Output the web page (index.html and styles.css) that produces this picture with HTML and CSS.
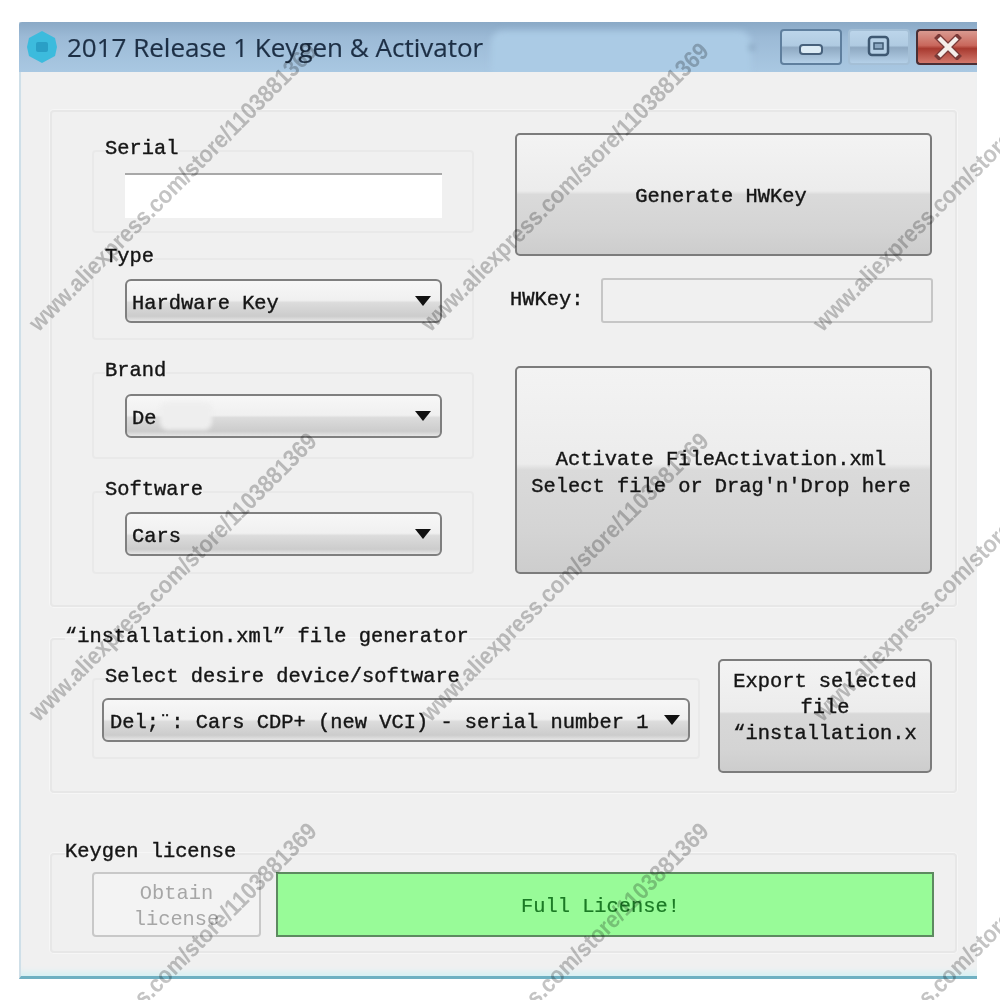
FILE: index.html
```html
<!DOCTYPE html>
<html lang="en">
<head>
    <meta charset="UTF-8">
    <meta name="viewport" content="width=device-width, initial-scale=1.0">
    <title>2017 Release 1 Keygen &amp; Activator</title>
    <link rel="stylesheet" href="styles.css">
</head>
<body>
    <div class="window">
        <div class="titlebar">
            <svg class="app-icon" width="32" height="34" viewBox="0 0 32 34">
                <path d="M16 1 L29 8 L31 17 L29 26 L16 33 L3 26 L1 17 L3 8 Z" fill="#3cbbdd"/>
                <rect x="10" y="12" width="12" height="10" rx="2" fill="#2a9fc6"/>
            </svg>
            <span class="app-title">2017 Release 1 Keygen &amp; Activator</span>
            <div class="title-smudge"></div>
            <div class="caption-buttons">
                <div class="caption-btn">
                    <svg width="26" height="14" viewBox="0 0 26 14">
                        <rect x="2" y="2" width="22" height="9" rx="3" fill="#dcebf5" stroke="#47617c" stroke-width="2"/>
                    </svg>
                </div>
                <div class="caption-btn max-btn">
                    <svg width="26" height="26" viewBox="0 0 26 26">
                        <rect x="3" y="3" width="19" height="18" rx="3" fill="#b6d0e6" stroke="#3e5872" stroke-width="2.5"/>
                        <rect x="8" y="9" width="9" height="6" fill="#8aa6c0" stroke="#3e5872" stroke-width="1.5"/>
                    </svg>
                </div>
                <div class="caption-btn close-btn">
                    <svg width="30" height="26" viewBox="0 0 30 26">
                        <path d="M6 4 L24 22 M24 4 L6 22" stroke="#7a3a38" stroke-width="7" stroke-linecap="square"/>
                        <path d="M6 4 L24 22 M24 4 L6 22" stroke="#f4eeea" stroke-width="4.5"/>
                    </svg>
                </div>
            </div>
        </div>

        <div class="window-body">
            <div class="panel panel-main">
                <div class="left-col">
                    <fieldset class="group group-serial">
                        <legend>Serial</legend>
                        <div class="serial-input"></div>
                    </fieldset>
                    <fieldset class="group">
                        <legend>Type</legend>
                        <div class="combo"><span>Hardware Key</span><i class="arrow"></i></div>
                    </fieldset>
                    <fieldset class="group group-brand">
                        <legend>Brand</legend>
                        <div class="combo"><span>De</span><div class="combo-smudge"></div><i class="arrow"></i></div>
                    </fieldset>
                    <fieldset class="group group-last">
                        <legend>Software</legend>
                        <div class="combo"><span>Cars</span><i class="arrow"></i></div>
                    </fieldset>
                </div>
                <div class="right-col">
                    <button type="button" class="btn generate-btn">Generate HWKey</button>
                    <div class="hwkey-row">
                        <label>HWKey:</label>
                        <div class="hwkey-input"></div>
                    </div>
                    <button type="button" class="btn activate-btn">Activate FileActivation.xml<br>Select file or Drag'n'Drop here</button>
                </div>
            </div>

            <fieldset class="panel panel-generator">
                <legend>“installation.xml” file generator</legend>
                <div class="generator-row">
                    <fieldset class="group group-device">
                        <legend>Select desire device/software</legend>
                        <div class="combo combo-device"><span>Del;¨: Cars CDP+ (new VCI) - serial number 1</span><i class="arrow"></i></div>
                    </fieldset>
                    <button type="button" class="btn export-btn">Export selected<br>file<br>“installation.x</button>
                </div>
            </fieldset>

            <fieldset class="panel panel-license">
                <legend>Keygen license</legend>
                <div class="license-row">
                    <button type="button" class="obtain-btn" disabled>Obtain<br>license</button>
                    <div class="license-status">Full License!</div>
                </div>
            </fieldset>
        </div>
    </div>

    <div class="watermarks">
        <div><span>www.aliexpress.com/store/1103881369</span></div>
        <div><span>www.aliexpress.com/store/1103881369</span></div>
        <div><span>www.aliexpress.com/store/1103881369</span></div>
        <div><span>www.aliexpress.com/store/1103881369</span></div>
        <div><span>www.aliexpress.com/store/1103881369</span></div>
        <div><span>www.aliexpress.com/store/1103881369</span></div>
        <div><span>www.aliexpress.com/store/1103881369</span></div>
        <div><span>www.aliexpress.com/store/1103881369</span></div>
        <div><span>www.aliexpress.com/store/1103881369</span></div>
    </div>
</body>
</html>
```

FILE: styles.css
```css
* {
    margin: 0;
    padding: 0;
    box-sizing: border-box;
}

html, body {
    height: 1000px;
    overflow: hidden;
}

body {
    background: white;
    padding: 22px 0 0 19px;
    font-family: "Liberation Mono", monospace;
    font-size: 20.4px;
    color: #151515;
    -webkit-text-stroke: 0.4px #151515;
}

.window {
    width: 958px;
    height: 957px;
    background: #f0f0f0;
    border-left: 2px solid #cfdfe8;
    border-bottom: 3px solid #6fb0c2;
    box-shadow: inset 0 -8px 6px -4px #d6f0f4;
}

/* title bar */
.titlebar {
    position: relative;
    display: flex;
    align-items: center;
    height: 50px;
    margin-left: -2px;
    padding-left: 7px;
    background: linear-gradient(#8aa9c6 0%, #9cbad6 30%, #a9c8e2 100%);
    border-radius: 3px 0 0 0;
    overflow: hidden;
}

.app-icon {
    margin-right: 9px;
}

.app-title {
    font-family: "Open Sans", sans-serif;
    font-size: 26px;
    color: #1d2f45;
    -webkit-text-stroke: 0.2px #1d2f45;
    white-space: nowrap;
}

.title-smudge {
    position: absolute;
    left: 472px;
    top: 9px;
    width: 260px;
    height: 50px;
    background: #abcbe5;
    border-radius: 12px;
    filter: blur(3px);
}

.title-smudge::after {
    content: "";
    position: absolute;
    right: -2px;
    top: 15px;
    width: 3px;
    height: 3px;
    background: #3e5872;
}

.caption-buttons {
    display: flex;
    gap: 6px;
    margin-left: auto;
    position: relative;
}

.caption-btn {
    display: flex;
    align-items: center;
    justify-content: center;
    width: 62px;
    height: 36px;
    border: 2px solid #5f7f9e;
    border-radius: 4px;
    background: linear-gradient(#bcd5ea 0%, #b0cbe2 45%, #8fa9c2 52%, #b4d0e8 100%);
}

.caption-btn svg {
    margin-top: 6px;
}

.max-btn {
    border-color: #a4bfd6;
}

.max-btn svg {
    margin-top: 0;
}

.close-btn {
    border-color: #4a2f35;
    border-right: none;
    border-radius: 4px 0 0 4px;
    width: 61px;
    background: linear-gradient(#d99a90 0%, #c9675c 45%, #a83a30 55%, #d2786c 100%);
}

.close-btn svg {
    margin-top: 0;
}

/* panels */
.window-body {
    padding: 38px 0 0 29px;
}

.panel {
    width: 907px;
    border: 2px solid #e7e7e7;
    border-radius: 4px;
    box-shadow: 0 0 0 1px #f6f6f6;
}

legend {
    margin-left: 13px;
    padding-bottom: 4px;
    line-height: 24px;
    white-space: nowrap;
}

.panel-main {
    display: flex;
    align-items: flex-start;
    padding: 21px 0 31px 40px;
}

.left-col {
    width: 382px;
    margin-top: 4px;
}

.right-col {
    width: 423px;
    margin-left: 36px;
}

.group {
    min-width: 0;
    border: 2px solid #e9e9e9;
    border-radius: 4px;
    padding: 6px 0 15px 31px;
    margin-bottom: 19px;
}

.group legend {
    margin-left: -20px;
}

.group-serial {
    padding-top: 8px;
    padding-bottom: 13px;
    margin-bottom: 12px;
}

.group-brand {
    padding-top: 7px;
    padding-bottom: 19px;
}

.group-last {
    padding-bottom: 16px;
    margin-bottom: 0;
}

.serial-input {
    width: 317px;
    height: 45px;
    background: white;
    border-top: 2px solid #a8a8a8;
}

.combo {
    position: relative;
    display: flex;
    align-items: center;
    justify-content: space-between;
    width: 317px;
    height: 44px;
    padding: 0 9px 0 5px;
    border: 2px solid #7f7f7f;
    border-radius: 6px;
    background: linear-gradient(#f7f7f7 0%, #f0f0f0 48%, #dcdcdc 54%, #cccccc 88%, #e6e6e6 100%);
    white-space: nowrap;
}

.combo span {
    position: relative;
    top: 2px;
}

.combo-smudge {
    position: absolute;
    left: 33px;
    top: 6px;
    width: 52px;
    height: 28px;
    background: #eeeeee;
    border-radius: 8px;
    filter: blur(2px);
}

.arrow {
    flex: none;
    width: 0;
    height: 0;
    border-left: 8px solid transparent;
    border-right: 8px solid transparent;
    border-top: 10px solid #111;
}

/* buttons on the right */
.btn {
    display: block;
    font-family: inherit;
    font-size: inherit;
    color: inherit;
    -webkit-text-stroke: inherit;
    line-height: 27px;
    border: 2px solid #7c7c7c;
    border-radius: 5px;
    background: linear-gradient(#f3f3f3 0%, #ececec 47%, #dadada 50%, #d4d4d4 80%, #cdcdcd 100%);
    white-space: nowrap;
    overflow: hidden;
}

.generate-btn {
    width: 417px;
    height: 123px;
    margin-left: 5px;
    padding: 3px 5px 0 0;
}

.hwkey-row {
    display: flex;
    align-items: center;
    justify-content: space-between;
    margin: 22px 0 43px;
}

.hwkey-row label {
    margin-top: -3px;
}

.hwkey-input {
    width: 332px;
    height: 45px;
    border: 2px solid #c6c6c6;
    border-radius: 3px;
    background: #f0f0f0;
}

.activate-btn {
    width: 417px;
    height: 208px;
    margin-left: 5px;
    padding: 5px 5px 0 0;
}

/* installation.xml generator */
.panel-generator {
    margin-top: 18px;
    min-width: 0;
    padding-bottom: 18px;
}

.generator-row {
    display: flex;
    align-items: flex-start;
    margin: 6px 0 0 40px;
}

.group-device {
    width: 608px;
    margin: 6px 0 0;
    padding: 5px 0 15px 8px;
}

.group-device legend {
    margin-left: 3px;
}

.combo-device {
    width: 588px;
    padding-left: 6px;
    padding-right: 8px;
}

.export-btn {
    width: 214px;
    height: 114px;
    margin-left: 18px;
    padding-bottom: 16px;
    line-height: 26px;
    background: linear-gradient(#f3f3f3 0%, #ececec 46%, #d8d8d8 48%, #d4d4d4 80%, #cdcdcd 100%);
}

/* license */
.panel-license {
    margin-top: 47px;
    min-width: 0;
    padding-bottom: 14px;
}

.license-row {
    display: flex;
    gap: 15px;
    margin: 4px 0 0 40px;
}

.obtain-btn {
    width: 169px;
    height: 65px;
    padding-top: 4px;
    font-family: inherit;
    font-size: inherit;
    line-height: 26px;
    color: #a6a6a6;
    -webkit-text-stroke: 0;
    background: #f3f3f3;
    border: 2px solid #c8c8c8;
    border-radius: 4px;
}

.license-status {
    display: flex;
    align-items: center;
    justify-content: center;
    width: 658px;
    height: 65px;
    padding: 3px 9px 0 0;
    background: #98fb98;
    border: 2px solid #5d8a60;
    color: #1b7a25;
    -webkit-text-stroke: 0.2px #1b7a25;
}

/* store watermark laid over the whole picture */
.watermarks {
    position: absolute;
    left: -23px;
    top: -8px;
    display: grid;
    grid-template-columns: repeat(3, 392px);
    grid-auto-rows: 390px;
    pointer-events: none;
    mix-blend-mode: multiply;
}

.watermarks div {
    display: flex;
    align-items: center;
    justify-content: center;
}

.watermarks span {
    transform: rotate(-45deg) scaleX(0.9);
    font-family: "Liberation Sans", sans-serif;
    font-size: 24px;
    font-weight: bold;
    white-space: nowrap;
    color: #c4c4c4;
    -webkit-text-stroke: 0;
}
```
